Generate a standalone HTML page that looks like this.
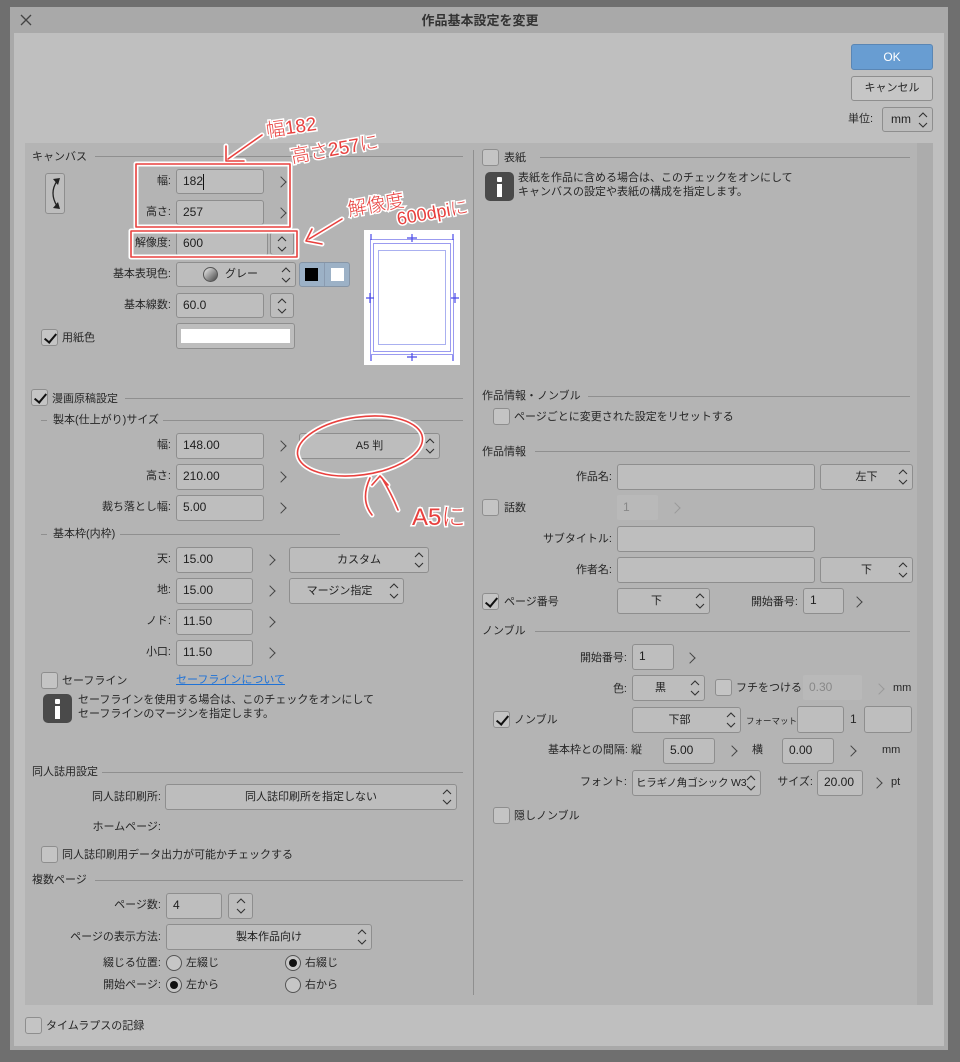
<!DOCTYPE html>
<html><head><meta charset="utf-8">
<style>
*{box-sizing:border-box;margin:0;padding:0}
body{width:960px;height:1062px;background:#6f6f6f;position:relative;overflow:hidden;font-family:"Liberation Sans","Noto Sans CJK JP",sans-serif;font-size:11px;color:#262626}
div,span{position:absolute}
.f{background:#bebebe;border:1px solid #8e8e8e;border-radius:3px;line-height:23px;padding-left:6px;font-size:12px;color:#1e1e1e}
.s{background:#bdbdbd;border:1px solid #8e8e8e;border-radius:3px;text-align:center;font-size:11px;color:#222}
.s svg{position:absolute;right:4px;top:50%;margin-top:-9px}
.sp{background:#bdbdbd;border:1px solid #8e8e8e;border-radius:3px}
.sp svg{position:absolute;left:50%;top:50%;margin:-9px 0 0 -5px}
.lr{text-align:right;width:160px;white-space:nowrap;line-height:14px}
.l{white-space:nowrap;line-height:14px}
.cb{width:17px;height:17px;background:#c4c4c4;border:1px solid #8e8e8e;border-radius:3px}
.cb.on::after{content:"";position:absolute;left:5px;top:1px;width:5px;height:10px;border:solid #111;border-width:0 2px 2px 0;transform:rotate(40deg)}
.ar{font-size:0;width:10px;height:14px}
.ar::after{content:"";position:absolute;left:0;top:3px;width:7px;height:7px;border:solid #444;border-width:1.3px 1.3px 0 0;transform:rotate(45deg)}
.ar.g::after{border-color:#999}
.hl{height:1px;background:#8f8f8f}
.rd{width:16px;height:16px;border:1px solid #555;border-radius:50%;background:#c6c6c6}
.rd.on::after{content:"";position:absolute;left:3px;top:3px;width:8px;height:8px;border-radius:50%;background:#111}
.info{background:#4a4a4a;border-radius:5px}
.info::before{content:"";position:absolute;left:12px;top:5px;width:5px;height:5px;background:#fff;border-radius:1px}
.info::after{content:"";position:absolute;left:12px;top:12px;width:5px;height:13px;background:#fff}
.dis{background:#b9b9b9;border-radius:2px;color:#888;line-height:25px;padding-left:6px;font-size:12px}
</style></head><body>
<div style="left:10px;top:7px;width:938px;height:1043px;background:#a9a9a9"></div>
<div style="left:14px;top:33px;width:930px;height:1013px;background:#bfbfbf"></div>
<div style="left:19px;top:13px;width:14px;height:14px">
<svg width="14" height="14"><path d="M2 2L12 12M12 2L2 12" stroke="#444" stroke-width="1.3"/></svg></div>
<div style="left:0;top:13px;width:960px;text-align:center;font-size:13px;font-weight:bold;color:#333;line-height:16px">作品基本設定を変更</div>
<div style="left:851px;top:44px;width:82px;height:26px;background:#689dd2;border:1px solid #5a86b4;border-radius:3px;color:#fff;text-align:center;line-height:24px;font-size:12px">OK</div>
<div style="left:851px;top:76px;width:82px;height:25px;background:#c6c6c6;border:1px solid #8e8e8e;border-radius:3px;text-align:center;line-height:23px;font-size:11px">キャンセル</div>
<div class="l" style="left:848px;top:112px">単位:</div>
<div class="s" style="left:882px;top:107px;width:51px;height:25px;line-height:23px;text-align:left;padding-left:8px;font-size:12px">mm<svg width="10" height="18"><path d="M1 6l4-4 4 4M1 12l4 4 4-4" fill="none" stroke="#333" stroke-width="1.1"/></svg></div>

<div style="left:25px;top:143px;width:908px;height:862px;background:#b4b4b4"></div>
<div style="left:917px;top:143px;width:16px;height:862px;background:#acacac"></div>
<div style="left:473px;top:150px;width:1px;height:845px;background:#8f8f8f"></div>

<div class="l" style="left:32px;top:150px">キャンバス</div>
<div class="hl" style="left:95px;top:156px;width:368px"></div>
<div style="left:45px;top:173px;width:20px;height:41px;background:#bdbdbd;border:1px solid #8e8e8e;border-radius:3px">
<svg width="18" height="39"><path d="M11 7Q3 19 11 32" fill="none" stroke="#222" stroke-width="1.3"/><path d="M7 5l7-1-2 7z M7 34l7 1-2-7z" fill="#222"/></svg></div>
<div class="lr" style="left:11px;top:174px">幅:</div>
<div class="f" style="left:176px;top:169px;width:88px;height:25px">182<span style="left:26px;top:4px;width:1px;height:16px;background:#111"></span></div>
<div class="ar" style="left:277px;top:175px">&gt;</div>
<div class="lr" style="left:11px;top:205px">高さ:</div>
<div class="f" style="left:176px;top:200px;width:88px;height:25px">257</div>
<div class="ar" style="left:277px;top:206px">&gt;</div>
<div class="lr" style="left:11px;top:236px">解像度:</div>
<div class="f" style="left:176px;top:231px;width:92px;height:25px">600</div>
<div class="sp" style="left:270px;top:232px;width:24px;height:23px"><svg width="10" height="18"><path d="M1 6l4-4 4 4M1 12l4 4 4-4" fill="none" stroke="#333" stroke-width="1.1"/></svg></div>
<div class="lr" style="left:11px;top:267px">基本表現色:</div>
<div class="s" style="left:176px;top:262px;width:120px;height:25px;line-height:23px"><span style="left:26px;top:4px;width:15px;height:15px;border-radius:50%;background:linear-gradient(135deg,#eee,#444);border:1px solid #555"></span><span style="left:48px;top:0">グレー</span><svg width="10" height="18"><path d="M1 6l4-4 4 4M1 12l4 4 4-4" fill="none" stroke="#333" stroke-width="1.1"/></svg></div>
<div style="left:299px;top:262px;width:51px;height:25px;background:#9cb1c6;border:1px solid #8695a6;border-radius:3px"><span style="left:5px;top:5px;width:13px;height:13px;background:#000"></span><span style="left:24px;top:0;width:1px;height:23px;background:#8a9bb0"></span><span style="left:31px;top:5px;width:13px;height:13px;background:#fff"></span></div>
<div class="lr" style="left:11px;top:298px">基本線数:</div>
<div class="f" style="left:176px;top:293px;width:88px;height:25px">60.0</div>
<div class="sp" style="left:270px;top:293px;width:24px;height:25px"><svg width="10" height="18"><path d="M1 6l4-4 4 4M1 12l4 4 4-4" fill="none" stroke="#333" stroke-width="1.1"/></svg></div>
<div class="cb on" style="left:41px;top:329px"></div>
<div class="l" style="left:62px;top:331px">用紙色</div>
<div style="left:176px;top:323px;width:119px;height:26px;background:#bdbdbd;border:1px solid #8e8e8e;border-radius:3px"><span style="left:4px;top:5px;width:109px;height:14px;background:#fff"></span></div>
<div style="left:364px;top:230px;width:96px;height:135px;background:#fff">
<svg width="96" height="135"><g fill="none" stroke="#9b9bf0" stroke-width="1"><rect x="6.5" y="9.5" width="83" height="115"/><rect x="9.5" y="13.5" width="77" height="108"/><rect x="14.5" y="20.5" width="67" height="94" stroke="#aab0f0"/></g><g stroke="#4a4ae8" stroke-width="1.2"><path d="M43 8h10M48 4v8M43 127h10M48 123v8M2 68h8M6 63v10M87 68h8M91 63v10M7 4v6M89 4v6M7 125v6M89 125v6"/></g></svg></div>

<div class="cb on" style="left:31px;top:389px"></div>
<div class="l" style="left:52px;top:392px">漫画原稿設定</div>
<div class="hl" style="left:125px;top:398px;width:338px"></div>
<div class="hl" style="left:41px;top:420px;width:6px"></div>
<div class="l" style="left:53px;top:413px">製本(仕上がり)サイズ</div>
<div class="hl" style="left:163px;top:420px;width:300px"></div>
<div class="lr" style="left:11px;top:438px">幅:</div>
<div class="f" style="left:176px;top:433px;width:88px;height:26px">148.00</div>
<div class="ar" style="left:277px;top:439px">&gt;</div>
<div class="s" style="left:299px;top:433px;width:141px;height:26px;line-height:24px">A5 判<svg width="10" height="18"><path d="M1 6l4-4 4 4M1 12l4 4 4-4" fill="none" stroke="#333" stroke-width="1.1"/></svg></div>
<div class="lr" style="left:11px;top:469px">高さ:</div>
<div class="f" style="left:176px;top:464px;width:88px;height:26px">210.00</div>
<div class="ar" style="left:277px;top:470px">&gt;</div>
<div class="lr" style="left:11px;top:500px">裁ち落とし幅:</div>
<div class="f" style="left:176px;top:495px;width:88px;height:26px">5.00</div>
<div class="ar" style="left:277px;top:501px">&gt;</div>
<div class="hl" style="left:41px;top:534px;width:6px"></div>
<div class="l" style="left:53px;top:527px">基本枠(内枠)</div>
<div class="hl" style="left:120px;top:534px;width:220px"></div>
<div class="lr" style="left:11px;top:552px">天:</div>
<div class="f" style="left:176px;top:547px;width:77px;height:26px">15.00</div>
<div class="ar" style="left:266px;top:553px">&gt;</div>
<div class="s" style="left:289px;top:547px;width:140px;height:26px;line-height:24px">カスタム<svg width="10" height="18"><path d="M1 6l4-4 4 4M1 12l4 4 4-4" fill="none" stroke="#333" stroke-width="1.1"/></svg></div>
<div class="lr" style="left:11px;top:583px">地:</div>
<div class="f" style="left:176px;top:578px;width:77px;height:26px">15.00</div>
<div class="ar" style="left:266px;top:584px">&gt;</div>
<div class="s" style="left:289px;top:578px;width:115px;height:26px;line-height:24px;padding-right:14px">マージン指定<svg width="10" height="18"><path d="M1 6l4-4 4 4M1 12l4 4 4-4" fill="none" stroke="#333" stroke-width="1.1"/></svg></div>
<div class="lr" style="left:11px;top:614px">ノド:</div>
<div class="f" style="left:176px;top:609px;width:77px;height:26px">11.50</div>
<div class="ar" style="left:266px;top:615px">&gt;</div>
<div class="lr" style="left:11px;top:645px">小口:</div>
<div class="f" style="left:176px;top:640px;width:77px;height:26px">11.50</div>
<div class="ar" style="left:266px;top:646px">&gt;</div>
<div class="cb" style="left:41px;top:672px"></div>
<div class="l" style="left:62px;top:674px">セーフライン</div>
<div class="l" style="left:176px;top:673px;color:#1f72d6;text-decoration:underline">セーフラインについて</div>
<div class="info" style="left:43px;top:694px;width:29px;height:29px"></div>
<div class="l" style="left:78px;top:693px">セーフラインを使用する場合は、このチェックをオンにして</div>
<div class="l" style="left:78px;top:707px">セーフラインのマージンを指定します。</div>

<div class="l" style="left:32px;top:765px">同人誌用設定</div>
<div class="hl" style="left:102px;top:772px;width:361px"></div>
<div class="lr" style="left:1px;top:790px">同人誌印刷所:</div>
<div class="s" style="left:165px;top:784px;width:292px;height:26px;line-height:24px">同人誌印刷所を指定しない<svg width="10" height="18"><path d="M1 6l4-4 4 4M1 12l4 4 4-4" fill="none" stroke="#333" stroke-width="1.1"/></svg></div>
<div class="lr" style="left:1px;top:820px">ホームページ:</div>
<div class="cb" style="left:41px;top:846px"></div>
<div class="l" style="left:62px;top:848px">同人誌印刷用データ出力が可能かチェックする</div>
<div class="l" style="left:32px;top:873px">複数ページ</div>
<div class="hl" style="left:95px;top:880px;width:368px"></div>
<div class="lr" style="left:1px;top:898px">ページ数:</div>
<div class="f" style="left:166px;top:893px;width:56px;height:26px">4</div>
<div class="sp" style="left:228px;top:893px;width:25px;height:26px"><svg width="10" height="18"><path d="M1 6l4-4 4 4M1 12l4 4 4-4" fill="none" stroke="#333" stroke-width="1.1"/></svg></div>
<div class="lr" style="left:1px;top:930px">ページの表示方法:</div>
<div class="s" style="left:166px;top:924px;width:206px;height:26px;line-height:24px">製本作品向け<svg width="10" height="18"><path d="M1 6l4-4 4 4M1 12l4 4 4-4" fill="none" stroke="#333" stroke-width="1.1"/></svg></div>
<div class="lr" style="left:1px;top:956px">綴じる位置:</div>
<div class="rd" style="left:166px;top:955px"></div><div class="l" style="left:186px;top:956px">左綴じ</div>
<div class="rd on" style="left:285px;top:955px"></div><div class="l" style="left:305px;top:956px">右綴じ</div>
<div class="lr" style="left:1px;top:978px">開始ページ:</div>
<div class="rd on" style="left:166px;top:977px"></div><div class="l" style="left:186px;top:978px">左から</div>
<div class="rd" style="left:285px;top:977px"></div><div class="l" style="left:305px;top:978px">右から</div>
<div class="cb" style="left:25px;top:1017px"></div>
<div class="l" style="left:46px;top:1019px">タイムラプスの記録</div>

<div class="cb" style="left:482px;top:149px"></div>
<div class="l" style="left:504px;top:151px">表紙</div>
<div class="hl" style="left:540px;top:157px;width:370px"></div>
<div class="info" style="left:485px;top:172px;width:29px;height:29px"></div>
<div class="l" style="left:518px;top:171px">表紙を作品に含める場合は、このチェックをオンにして</div>
<div class="l" style="left:518px;top:185px">キャンバスの設定や表紙の構成を指定します。</div>
<div class="l" style="left:482px;top:389px">作品情報・ノンブル</div>
<div class="hl" style="left:588px;top:396px;width:322px"></div>
<div class="cb" style="left:493px;top:408px"></div>
<div class="l" style="left:514px;top:410px">ページごとに変更された設定をリセットする</div>
<div class="l" style="left:482px;top:445px">作品情報</div>
<div class="hl" style="left:535px;top:451px;width:375px"></div>
<div class="lr" style="left:452px;top:470px">作品名:</div>
<div class="f" style="left:617px;top:464px;width:198px;height:26px"></div>
<div class="s" style="left:820px;top:464px;width:93px;height:26px;line-height:24px">左下<svg width="10" height="18"><path d="M1 6l4-4 4 4M1 12l4 4 4-4" fill="none" stroke="#333" stroke-width="1.1"/></svg></div>
<div class="cb" style="left:482px;top:499px"></div>
<div class="l" style="left:504px;top:501px">話数</div>
<div class="dis" style="left:617px;top:495px;width:41px;height:25px">1</div>
<div class="ar g" style="left:671px;top:501px">&gt;</div>
<div class="lr" style="left:452px;top:532px">サブタイトル:</div>
<div class="f" style="left:617px;top:526px;width:198px;height:26px"></div>
<div class="lr" style="left:452px;top:563px">作者名:</div>
<div class="f" style="left:617px;top:557px;width:198px;height:26px"></div>
<div class="s" style="left:820px;top:557px;width:93px;height:26px;line-height:24px">下<svg width="10" height="18"><path d="M1 6l4-4 4 4M1 12l4 4 4-4" fill="none" stroke="#333" stroke-width="1.1"/></svg></div>
<div class="cb on" style="left:482px;top:593px"></div>
<div class="l" style="left:504px;top:595px">ページ番号</div>
<div class="s" style="left:617px;top:588px;width:93px;height:26px;line-height:24px;padding-right:14px">下<svg width="10" height="18"><path d="M1 6l4-4 4 4M1 12l4 4 4-4" fill="none" stroke="#333" stroke-width="1.1"/></svg></div>
<div class="lr" style="left:638px;top:595px">開始番号:</div>
<div class="f" style="left:803px;top:588px;width:41px;height:26px">1</div>
<div class="ar" style="left:853px;top:595px">&gt;</div>
<div class="l" style="left:482px;top:624px">ノンブル</div>
<div class="hl" style="left:535px;top:631px;width:375px"></div>
<div class="lr" style="left:467px;top:651px">開始番号:</div>
<div class="f" style="left:632px;top:644px;width:42px;height:26px">1</div>
<div class="ar" style="left:686px;top:651px">&gt;</div>
<div class="lr" style="left:467px;top:682px">色:</div>
<div class="s" style="left:632px;top:675px;width:73px;height:26px;line-height:24px;padding-right:16px">黒<svg width="10" height="18"><path d="M1 6l4-4 4 4M1 12l4 4 4-4" fill="none" stroke="#333" stroke-width="1.1"/></svg></div>
<div class="cb" style="left:715px;top:679px"></div>
<div class="l" style="left:736px;top:681px">フチをつける</div>
<div class="dis" style="left:803px;top:675px;width:59px;height:25px">0.30</div>
<div class="ar g" style="left:875px;top:682px">&gt;</div>
<div class="l" style="left:893px;top:681px">mm</div>
<div class="cb on" style="left:493px;top:711px"></div>
<div class="l" style="left:514px;top:713px">ノンブル</div>
<div class="s" style="left:632px;top:707px;width:109px;height:26px;line-height:24px;padding-right:14px">下部<svg width="10" height="18"><path d="M1 6l4-4 4 4M1 12l4 4 4-4" fill="none" stroke="#333" stroke-width="1.1"/></svg></div>
<div class="l" style="left:746px;top:714px;font-size:8.5px">フォーマット</div>
<div class="f" style="left:797px;top:706px;width:47px;height:27px"></div>
<div class="l" style="left:850px;top:712px;font-size:12px">1</div>
<div class="f" style="left:864px;top:706px;width:48px;height:27px"></div>
<div class="lr" style="left:482px;top:743px">基本枠との間隔: 縦</div>
<div class="f" style="left:663px;top:738px;width:52px;height:26px">5.00</div>
<div class="ar" style="left:728px;top:744px">&gt;</div>
<div class="l" style="left:752px;top:743px">横</div>
<div class="f" style="left:782px;top:738px;width:52px;height:26px">0.00</div>
<div class="ar" style="left:847px;top:744px">&gt;</div>
<div class="l" style="left:882px;top:743px">mm</div>
<div class="lr" style="left:467px;top:775px">フォント:</div>
<div class="s" style="left:632px;top:770px;width:129px;height:26px;line-height:24px;text-align:left;padding-left:3px;font-size:10.5px;letter-spacing:-0.2px">ヒラギノ角ゴシック W3<svg width="10" height="18"><path d="M1 6l4-4 4 4M1 12l4 4 4-4" fill="none" stroke="#333" stroke-width="1.1"/></svg></div>
<div class="lr" style="left:653px;top:775px">サイズ:</div>
<div class="f" style="left:817px;top:770px;width:46px;height:26px">20.00</div>
<div class="ar" style="left:873px;top:776px">&gt;</div>
<div class="l" style="left:891px;top:775px">pt</div>
<div class="cb" style="left:493px;top:807px"></div>
<div class="l" style="left:514px;top:809px">隠しノンブル</div>

<svg style="position:absolute;left:0;top:0" width="960" height="1062">
<g fill="none" stroke-linecap="round" stroke-linejoin="round">
<g stroke="#fff" stroke-width="5">
<rect x="136" y="164" width="154" height="63"/><rect x="131" y="231" width="166" height="26"/>
<path d="M262 135L228 159M226 146L226 161L244 161"/>
<path d="M342 219L309 239M312 229L306 241L322 244"/>
<ellipse cx="360" cy="446" rx="63" ry="29" transform="rotate(-8 360 446)"/>
<path d="M370 478Q360 500 372 515M382 478Q392 495 398 510M372 485L380 476L388 485"/>
</g>
<g stroke="#e8403e" stroke-width="1.6">
<rect x="136" y="164" width="154" height="63"/><rect x="131" y="231" width="166" height="26"/>
<path d="M262 135L228 159M226 146L226 161L244 161"/>
<path d="M342 219L309 239M312 229L306 241L322 244"/>
<ellipse cx="360" cy="446" rx="63" ry="29" transform="rotate(-8 360 446)"/>
<path d="M370 478Q360 500 372 515M382 478Q392 495 398 510M372 485L380 476L388 485"/>
</g></g>
<g font-family="Liberation Sans,Noto Sans CJK JP,sans-serif" fill="#e8403e" stroke="#fff" stroke-width="3" paint-order="stroke" font-weight="300">
<text x="267" y="137" font-size="19" transform="rotate(-8 267 137)">幅182</text>
<text x="292" y="163" font-size="19" transform="rotate(-10 292 163)">高さ257に</text>
<text x="349" y="216" font-size="19" transform="rotate(-10 349 216)">解像度</text>
<text x="398" y="225" font-size="18" transform="rotate(-10 398 225)">600dpiに</text>
<text x="412" y="525" font-size="24">A5に</text>
</g></svg>
</body></html>
